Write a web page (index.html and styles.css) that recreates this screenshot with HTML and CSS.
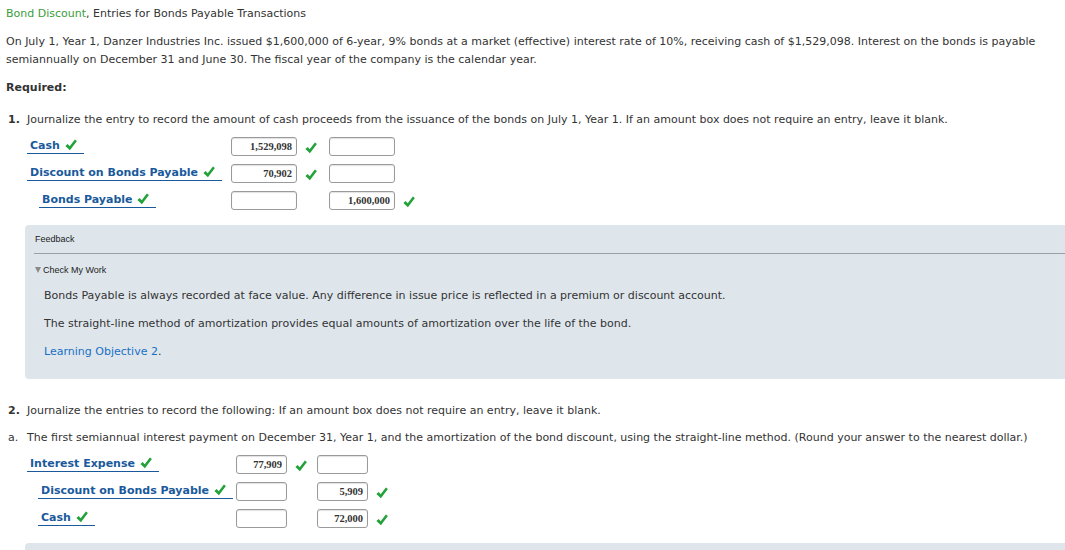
FILE: index.html
```html
<!DOCTYPE html>
<html>
<head>
<meta charset="utf-8">
<link rel="stylesheet" href="styles.css">
</head>
<body>
<svg width="0" height="0" class="defs">
  <defs>
    <symbol id="ck" viewBox="0 0 12 12">
      <path d="M0.4 6.9 L2.7 4.9 L4.7 7.3 L9.9 0.4 L11.9 2.1 L4.9 11.3 Z" fill="#23a23a"/>
    </symbol>
  </defs>
</svg>
<div class="page">
  <p class="title"><span class="topic">Bond Discount</span>, Entries for Bonds Payable Transactions</p>
  <p class="para">On July 1, Year 1, Danzer Industries Inc. issued $1,600,000 of 6-year, 9% bonds at a market (effective) interest rate of 10%, receiving cash of $1,529,098. Interest on the bonds is payable semiannually on December 31 and June 30. The fiscal year of the company is the calendar year.</p>
  <p class="req">Required:</p>

  <p class="q q1"><span class="num">1.</span>Journalize the entry to record the amount of cash proceeds from the issuance of the bonds on July 1, Year 1. If an amount box does not require an entry, leave it blank.</p>
  <div class="journal j1">
    <div class="entry">
      <div class="acct"><span class="lbl">Cash <svg class="ck"><use href="#ck"/></svg></span></div>
      <div class="box">1,529,098</div><div class="slot"><svg class="ck"><use href="#ck"/></svg></div>
      <div class="box"></div><div class="slot"></div>
    </div>
    <div class="entry">
      <div class="acct"><span class="lbl">Discount on Bonds Payable <svg class="ck"><use href="#ck"/></svg></span></div>
      <div class="box">70,902</div><div class="slot"><svg class="ck"><use href="#ck"/></svg></div>
      <div class="box"></div><div class="slot"></div>
    </div>
    <div class="entry">
      <div class="acct indent"><span class="lbl">Bonds Payable <svg class="ck"><use href="#ck"/></svg></span></div>
      <div class="box"></div><div class="slot"></div>
      <div class="box">1,600,000</div><div class="slot"><svg class="ck"><use href="#ck"/></svg></div>
    </div>
  </div>

  <div class="feedback">
    <div class="fb-head">Feedback</div>
    <div class="cmw"><span class="tri"></span>Check My Work</div>
    <p class="fb-text">Bonds Payable is always recorded at face value. Any difference in issue price is reflected in a premium or discount account.</p>
    <p class="fb-text">The straight-line method of amortization provides equal amounts of amortization over the life of the bond.</p>
    <p class="fb-text"><a class="lo">Learning Objective 2</a>.</p>
  </div>

  <p class="q q2"><span class="num">2.</span>Journalize the entries to record the following: If an amount box does not require an entry, leave it blank.</p>
  <p class="q qa"><span class="num">a.</span>The first semiannual interest payment on December 31, Year 1, and the amortization of the bond discount, using the straight-line method. (Round your answer to the nearest dollar.)</p>
  <div class="journal j2">
    <div class="entry">
      <div class="acct"><span class="lbl">Interest Expense <svg class="ck"><use href="#ck"/></svg></span></div>
      <div class="box">77,909</div><div class="slot"><svg class="ck"><use href="#ck"/></svg></div>
      <div class="box"></div><div class="slot"></div>
    </div>
    <div class="entry">
      <div class="acct indent"><span class="lbl">Discount on Bonds Payable <svg class="ck"><use href="#ck"/></svg></span></div>
      <div class="box"></div><div class="slot"></div>
      <div class="box">5,909</div><div class="slot"><svg class="ck"><use href="#ck"/></svg></div>
    </div>
    <div class="entry">
      <div class="acct indent"><span class="lbl">Cash <svg class="ck"><use href="#ck"/></svg></span></div>
      <div class="box"></div><div class="slot"></div>
      <div class="box">72,000</div><div class="slot"><svg class="ck"><use href="#ck"/></svg></div>
    </div>
  </div>
  <div class="feedback next"></div>
</div>
</body>
</html>
```

FILE: styles.css
```css
html, body {
  margin: 0;
  padding: 0;
  background: #fff;
  overflow: hidden;
}
.defs { position: absolute; width: 0; height: 0; }
.page {
  padding: 5px 0 0 6px;
  font-family: "DejaVu Sans", Verdana, sans-serif;
  font-size: 11px;
  line-height: 18px;
  color: #333;
}
p { margin: 0; }
.title { height: 18px; }
.topic { color: #3a9d3a; }
.para { margin-top: 10px; padding-right: 20px; }
.req { margin-top: 10px; font-weight: bold; }
.q { padding-left: 2px; display: flex; }
.num { width: 19px; flex: none; font-weight: bold; }
.qa .num { font-weight: normal; }
.q1 { margin-top: 14px; }
.journal { margin-top: 8px; padding-left: 2px; }
.entry {
  display: flex;
  align-items: flex-start;
  height: 27px;
}
.acct {
  width: 204px;
  padding-left: 19px;
  flex: none;
}
.j1 .acct.indent { width: 192px; padding-left: 31px; }
.j2 .acct { width: 209px; }
.j2 .acct.indent { width: 198px; padding-left: 30px; }
.lbl {
  display: inline-block;
  margin-top: -2px;
  font-weight: bold;
  color: #1a5a9c;
  line-height: 13px;
  padding: 0 7px 1px 3px;
  border-bottom: 1px solid #1a5a9c;
}
.lbl .ck { margin-left: 1px; vertical-align: -2px; }
.ck { width: 12px; height: 12px; display: inline-block; }
.box {
  flex: none;
  height: 17px;
  border: 1px solid #9a9a9a;
  border-radius: 3px;
  box-shadow: inset 0 1px 1px rgba(0,0,0,0.12);
  background: #fff;
  font-family: "Liberation Serif", "Times New Roman", serif;
  font-size: 10.5px;
  font-weight: bold;
  line-height: 18px;
  text-align: right;
  padding-right: 4px;
  box-sizing: content-box;
  width: 60px;
  color: #333;
}
.slot { flex: none; width: 32px; height: 19px; display: flex; align-items: center; }
.slot .ck { margin-left: 8px; margin-top: 3px; }
.j2 .box { width: 45px; }
.j2 .slot { width: 30px; }
.feedback {
  margin: 7px -20px 0 19px;
  background: #dee6ec;
  border-radius: 4px;
  padding: 0 0 18px 0;
}
.fb-head {
  font-family: "Liberation Sans", Arial, sans-serif;
  font-size: 9px;
  color: #222;
  height: 28px;
  line-height: 28px;
  border-bottom: 1px solid #9aa1a1;
  margin-left: 9px;
  padding-left: 1px;
}
.cmw {
  font-family: "Liberation Sans", Arial, sans-serif;
  font-size: 9px;
  color: #222;
  margin-top: 8px;
  line-height: 16px;
  padding-left: 10px;
}
.tri {
  display: inline-block;
  width: 0; height: 0;
  border-left: 3.5px solid transparent;
  border-right: 3.5px solid transparent;
  border-top: 6px solid #8a8a8a;
  margin-right: 2px;
  vertical-align: 0px;
}
.fb-text { padding-left: 19px; margin-top: 10px; }
.cmw + .fb-text { margin-top: 9px; }
.lo { color: #1a6fc4; text-decoration: none; }
.q2 { margin-top: 23px; }
.qa { margin-top: 9px; }
.feedback.next { height: 30px; padding: 0; }
```
